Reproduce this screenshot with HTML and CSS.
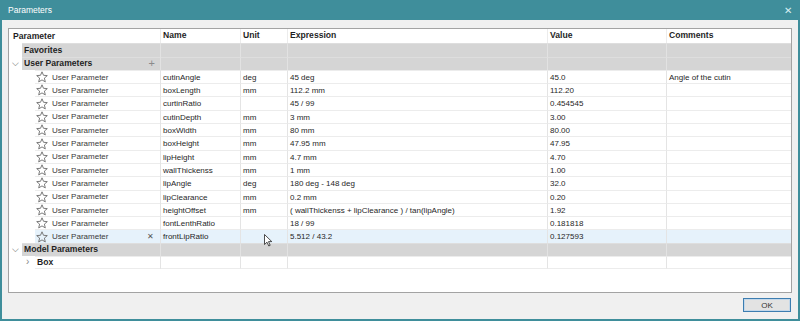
FILE: index.html
```html
<!DOCTYPE html>
<html lang="en">
	<head>
		<meta charset="UTF-8">
		<title>Parameters</title>
		<link rel="stylesheet" href="styles.css">
	</head>
	<body>
		<div class="window">
			<div class="titlebar">
				<span class="title">Parameters</span>
				<span class="close">&#x2715;</span>
			</div>
			<div class="content">
				<div class="frame">
					<!-- 表头 -->
					<div class="row head">
						<div class="c first"><div class="fill">Parameter</div></div>
						<div class="c">Name</div>
						<div class="c">Unit</div>
						<div class="c">Expression</div>
						<div class="c">Value</div>
						<div class="c">Comments</div>
					</div>
					<div class="row group lvl1">
						<div class="c first"><div class="fill">Favorites</div></div>
						<div class="c"></div><div class="c"></div><div class="c"></div><div class="c"></div><div class="c"></div>
					</div>
					<div class="row group lvl1">
						<div class="c first"><span class="chev">&#x2335;</span><div class="fill">User Parameters<span class="plus">+</span></div></div>
						<div class="c"></div><div class="c"></div><div class="c"></div><div class="c"></div><div class="c"></div>
					</div>

					<div class="row item">
						<div class="c first"><div class="fill"><svg class="star" viewBox="0 0 12 12"><path d="M6 0.8 L7.5 4.3 L11.3 4.6 L8.4 7.1 L9.3 10.9 L6 8.9 L2.7 10.9 L3.6 7.1 L0.7 4.6 L4.5 4.3 Z"/></svg>User Parameter</div></div>
						<div class="c">cutinAngle</div><div class="c">deg</div><div class="c">45 deg</div><div class="c">45.0</div><div class="c">Angle of the cutin</div>
					</div>
					<div class="row item">
						<div class="c first"><div class="fill"><svg class="star" viewBox="0 0 12 12"><path d="M6 0.8 L7.5 4.3 L11.3 4.6 L8.4 7.1 L9.3 10.9 L6 8.9 L2.7 10.9 L3.6 7.1 L0.7 4.6 L4.5 4.3 Z"/></svg>User Parameter</div></div>
						<div class="c">boxLength</div><div class="c">mm</div><div class="c">112.2 mm</div><div class="c">112.20</div><div class="c"></div>
					</div>
					<div class="row item">
						<div class="c first"><div class="fill"><svg class="star" viewBox="0 0 12 12"><path d="M6 0.8 L7.5 4.3 L11.3 4.6 L8.4 7.1 L9.3 10.9 L6 8.9 L2.7 10.9 L3.6 7.1 L0.7 4.6 L4.5 4.3 Z"/></svg>User Parameter</div></div>
						<div class="c">curtinRatio</div><div class="c"></div><div class="c">45 / 99</div><div class="c">0.454545</div><div class="c"></div>
					</div>
					<div class="row item">
						<div class="c first"><div class="fill"><svg class="star" viewBox="0 0 12 12"><path d="M6 0.8 L7.5 4.3 L11.3 4.6 L8.4 7.1 L9.3 10.9 L6 8.9 L2.7 10.9 L3.6 7.1 L0.7 4.6 L4.5 4.3 Z"/></svg>User Parameter</div></div>
						<div class="c">cutinDepth</div><div class="c">mm</div><div class="c">3 mm</div><div class="c">3.00</div><div class="c"></div>
					</div>
					<div class="row item">
						<div class="c first"><div class="fill"><svg class="star" viewBox="0 0 12 12"><path d="M6 0.8 L7.5 4.3 L11.3 4.6 L8.4 7.1 L9.3 10.9 L6 8.9 L2.7 10.9 L3.6 7.1 L0.7 4.6 L4.5 4.3 Z"/></svg>User Parameter</div></div>
						<div class="c">boxWidth</div><div class="c">mm</div><div class="c">80 mm</div><div class="c">80.00</div><div class="c"></div>
					</div>
					<div class="row item">
						<div class="c first"><div class="fill"><svg class="star" viewBox="0 0 12 12"><path d="M6 0.8 L7.5 4.3 L11.3 4.6 L8.4 7.1 L9.3 10.9 L6 8.9 L2.7 10.9 L3.6 7.1 L0.7 4.6 L4.5 4.3 Z"/></svg>User Parameter</div></div>
						<div class="c">boxHeight</div><div class="c">mm</div><div class="c">47.95 mm</div><div class="c">47.95</div><div class="c"></div>
					</div>
					<div class="row item">
						<div class="c first"><div class="fill"><svg class="star" viewBox="0 0 12 12"><path d="M6 0.8 L7.5 4.3 L11.3 4.6 L8.4 7.1 L9.3 10.9 L6 8.9 L2.7 10.9 L3.6 7.1 L0.7 4.6 L4.5 4.3 Z"/></svg>User Parameter</div></div>
						<div class="c">lipHeight</div><div class="c">mm</div><div class="c">4.7 mm</div><div class="c">4.70</div><div class="c"></div>
					</div>
					<div class="row item">
						<div class="c first"><div class="fill"><svg class="star" viewBox="0 0 12 12"><path d="M6 0.8 L7.5 4.3 L11.3 4.6 L8.4 7.1 L9.3 10.9 L6 8.9 L2.7 10.9 L3.6 7.1 L0.7 4.6 L4.5 4.3 Z"/></svg>User Parameter</div></div>
						<div class="c">wallThickenss</div><div class="c">mm</div><div class="c">1 mm</div><div class="c">1.00</div><div class="c"></div>
					</div>
					<div class="row item">
						<div class="c first"><div class="fill"><svg class="star" viewBox="0 0 12 12"><path d="M6 0.8 L7.5 4.3 L11.3 4.6 L8.4 7.1 L9.3 10.9 L6 8.9 L2.7 10.9 L3.6 7.1 L0.7 4.6 L4.5 4.3 Z"/></svg>User Parameter</div></div>
						<div class="c">lipAngle</div><div class="c">deg</div><div class="c">180 deg - 148 deg</div><div class="c">32.0</div><div class="c"></div>
					</div>
					<div class="row item">
						<div class="c first"><div class="fill"><svg class="star" viewBox="0 0 12 12"><path d="M6 0.8 L7.5 4.3 L11.3 4.6 L8.4 7.1 L9.3 10.9 L6 8.9 L2.7 10.9 L3.6 7.1 L0.7 4.6 L4.5 4.3 Z"/></svg>User Parameter</div></div>
						<div class="c">lipClearance</div><div class="c">mm</div><div class="c">0.2 mm</div><div class="c">0.20</div><div class="c"></div>
					</div>
					<div class="row item">
						<div class="c first"><div class="fill"><svg class="star" viewBox="0 0 12 12"><path d="M6 0.8 L7.5 4.3 L11.3 4.6 L8.4 7.1 L9.3 10.9 L6 8.9 L2.7 10.9 L3.6 7.1 L0.7 4.6 L4.5 4.3 Z"/></svg>User Parameter</div></div>
						<div class="c">heightOffset</div><div class="c">mm</div><div class="c">( wallThickenss + lipClearance ) / tan(lipAngle)</div><div class="c">1.92</div><div class="c"></div>
					</div>
					<div class="row item">
						<div class="c first"><div class="fill"><svg class="star" viewBox="0 0 12 12"><path d="M6 0.8 L7.5 4.3 L11.3 4.6 L8.4 7.1 L9.3 10.9 L6 8.9 L2.7 10.9 L3.6 7.1 L0.7 4.6 L4.5 4.3 Z"/></svg>User Parameter</div></div>
						<div class="c">fontLenthRatio</div><div class="c"></div><div class="c">18 / 99</div><div class="c">0.181818</div><div class="c"></div>
					</div>
					<div class="row item hover">
						<div class="c first"><div class="fill"><svg class="star" viewBox="0 0 12 12"><path d="M6 0.8 L7.5 4.3 L11.3 4.6 L8.4 7.1 L9.3 10.9 L6 8.9 L2.7 10.9 L3.6 7.1 L0.7 4.6 L4.5 4.3 Z"/></svg>User Parameter<span class="del">&#x2715;</span></div></div>
						<div class="c">frontLipRatio</div><div class="c"></div><div class="c">5.512 / 43.2</div><div class="c">0.127593</div><div class="c"></div>
					</div>

					<div class="row group lvl1">
						<div class="c first"><span class="chev">&#x2335;</span><div class="fill">Model Parameters</div></div>
						<div class="c"></div><div class="c"></div><div class="c"></div><div class="c"></div><div class="c"></div>
					</div>
					<div class="row sub">
						<div class="c first"><span class="chev right">&#x203A;</span><div class="fill">Box</div></div>
						<div class="c"></div><div class="c"></div><div class="c"></div><div class="c"></div><div class="c"></div>
					</div>

					<!-- 鼠标指针 -->
					<svg class="cursor" viewBox="0 0 9 13"><path d="M0.5 0.5 L0.5 10.5 L3 8.2 L4.8 12 L6.2 11.3 L4.5 7.6 L7.8 7.6 Z"/></svg>
				</div>
				<div class="footer">
					<button class="btn">OK</button>
				</div>
			</div>
		</div>
	</body>
</html>
```

FILE: styles.css
```css
* {
    margin: 0;
    padding: 0;
    box-sizing: border-box;
}
body {
    width: 800px;
    height: 321px;
    overflow: hidden;
    font-family: "Liberation Sans", Arial, sans-serif;
    font-size: 8px;
    color: #1f1f1f;
}
.window {
    width: 800px;
    height: 321px;
    border: 2px solid #3f8e9b;
    border-top: none;
    background-color: #f0f0f0;
    display: flex;
    flex-direction: column;
}
.titlebar {
    height: 20px;
    margin: 0 -2px;
    background-color: #3f8e9b;
    color: #fff;
    display: flex;
    align-items: center;
    justify-content: space-between;
    padding: 0 8px 0 8px;
    font-size: 8.5px;
}
.titlebar .close {
    font-size: 10px;
    color: #d8eef2;
}
.content {
    padding: 8px 6px 0 6px;
}
.frame {
    height: 265px;
    border: 1px solid #a3a3a3;
    background-color: #fff;
    position: relative;
}
.row {
    display: grid;
    grid-template-columns: 152px 80px 47px 260px 119px 1fr;
    height: 13.3px;
    line-height: 13px;
}
.row .c {
    border-right: 1px solid #e4e4e4;
    padding-left: 2px;
    white-space: nowrap;
    overflow: hidden;
}
.row .c:last-child {
    border-right: none;
}
.row .first {
    display: flex;
    padding-left: 0;
    position: relative;
}
.row .fill {
    flex: 1;
    display: flex;
    align-items: center;
    position: relative;
}
.head {
    height: 14.3px;
    font-weight: bold;
    font-size: 8.6px;
}
.head .c {
    padding-left: 2px;
    border-right-color: #ececec;
}
.head .first .fill {
    padding-left: 2px;
}
/* 分组行 */
.group .c {
    background-color: #d5d5d5;
    border-right-color: #e2e2e2;
    border-top: 1px solid #dedede;
}
.group .first {
    background-color: #fff;
    border-top: none;
}
.group .first .fill {
    background-color: #d5d5d5;
    border-top: 1px solid #dedede;
    margin-left: 13px;
    padding-left: 2px;
    font-weight: bold;
    font-size: 8.6px;
}
.chev {
    position: absolute;
    left: 3px;
    top: 0;
    font-size: 9px;
    color: #555;
}
.chev.right {
    left: 17px;
    font-size: 10px;
    line-height: 12px;
    color: #888;
}
.plus {
    position: absolute;
    right: 5px;
    top: -1px;
    font-size: 11px;
    font-weight: normal;
    color: #8a8a8a;
}
/* 参数行 */
.item .c {
    border-top: 1px solid #ececec;
}
.item .first {
    border-top: none;
}
.item .first .fill {
    margin-left: 26px;
    border-top: 1px solid #ececec;
    color: #3a3a3a;
}
.star {
    width: 12px;
    height: 12px;
    margin: 0 4px 0 1px;
    fill: none;
    stroke: #6c6c6c;
    stroke-width: 0.9;
    stroke-linejoin: round;
}
.del {
    position: absolute;
    right: 6px;
    top: 0;
    font-size: 8px;
    color: #555;
}
.hover .c,
.hover .first .fill {
    background-color: #e6f2fb;
}
.hover .first {
    background-color: #fff;
}
.sub .c {
    border-top: 1px solid #ececec;
    border-bottom: 1px solid #ececec;
}
.sub .first {
    border-top: none;
    border-bottom: none;
}
.sub .first .fill {
    margin-left: 26px;
    padding-left: 2px;
    border-top: 1px solid #ececec;
    border-bottom: 1px solid #ececec;
    font-weight: bold;
    font-size: 8.6px;
}
.cursor {
    position: absolute;
    left: 255px;
    top: 205px;
    width: 9px;
    height: 13px;
    fill: #fff;
    stroke: #222;
    stroke-width: 0.8;
}
.footer {
    display: flex;
    justify-content: flex-end;
    padding: 5px 1px 0 0;
}
.btn {
    width: 48px;
    height: 14px;
    border: 1px solid #3c7db0;
    background-color: #e3e3e3;
    font-family: "Liberation Sans", Arial, sans-serif;
    font-size: 8px;
    color: #333;
    box-shadow: inset 0 0 0 1px #c4d8ea;
}
```
